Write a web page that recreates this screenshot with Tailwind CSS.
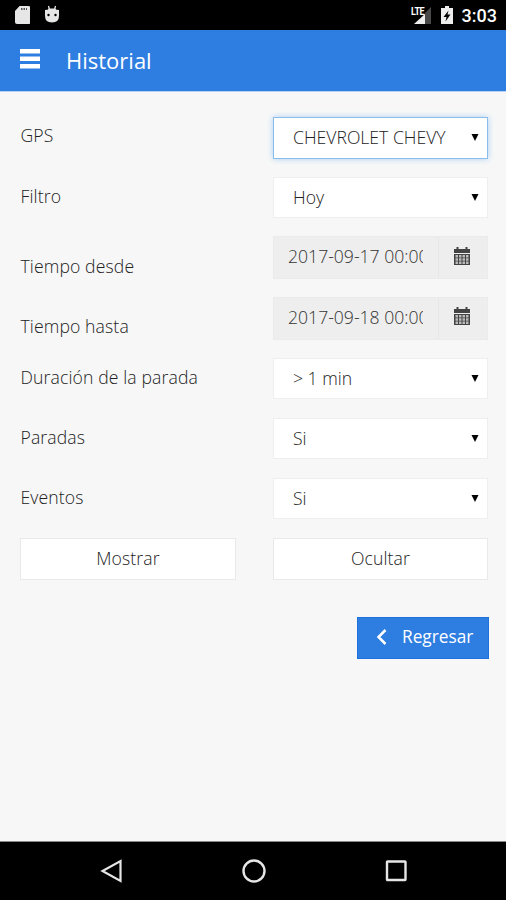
<!DOCTYPE html>
<html lang="es">
<head>
    <meta charset="UTF-8">
    <meta name="viewport" content="width=device-width, initial-scale=1.0">
    <script src="https://cdn.jsdelivr.net/npm/@tailwindcss/browser@4"></script>
    <title>Historial</title>
</head>
<body class="bg-[#f7f7f7] font-['Open_Sans',sans-serif] text-[17.6px] font-light leading-6 text-[#222]">
    <div class="flex flex-col h-[900px] w-[506px] overflow-hidden">
        <!-- Status bar -->
        <div class="flex h-[30px] shrink-0 items-center bg-black pl-[14px] pr-[9px] text-white">
            <svg class="w-4 h-5" viewBox="0 0 16 20" fill="#e6e6e6"><path d="M5.500 1h9q2 0 2 2v14q0 2-2 2H3q-2 0-2-2V6z"/><path d="M7 3h1.500v2H7zM9.500 3h1.500v2H9.500zM12 3h1v2h-1z" fill="#555"/></svg>
            <svg class="ml-[14px] w-4 h-5" viewBox="0 0 16 20"><path d="M4.500 1l1 4M11.500 1l-1 4" stroke="#e6e6e6" stroke-width="1.300"/><path d="M1 5q3 0 4-1.500h6Q12 5 15 5v6q0 6.500-7 6.500T1 11z" fill="#e6e6e6"/><circle cx="4.500" cy="10" r="1.200"/><circle cx="11.500" cy="10" r="1.200"/></svg>
            <div class="ml-auto flex items-center">
                <div class="relative w-[23px] h-5">
                    <span class="absolute left-0.5 top-0.5 origin-left scale-x-90 font-['Roboto',sans-serif] text-[10px] font-bold leading-[10px] tracking-[-0.500px]">LTE</span>
                    <svg class="w-[23px] h-5" viewBox="0 0 23 20"><path d="M22 2v17H16V8z" fill="#484848"/><path d="M16 9v10H5z" fill="#eee"/></svg>
                </div>
                <svg class="ml-[9px] w-[12px] h-5" viewBox="0 0 12 20"><path d="M4 1h4v2h4v16H0V3h4z" fill="#eee"/><path d="M7.500 5.500L2.500 12H5.500L4.500 16.500L9.500 9.500H6.500z"/></svg>
                <span class="ml-[9px] mt-0.5 font-['Roboto',sans-serif] text-[18px] font-medium leading-5">3:03</span>
            </div>
        </div>

        <!-- Header -->
        <header class="flex h-[62px] shrink-0 items-center border-b border-[#b8d2f3] bg-[#2e7de1] pl-5 text-white">
            <svg class="w-5 h-5 -mt-1" viewBox="0 0 20 20" fill="currentColor"><path d="M0 0h20v4.500H0zM0 7.500h20v4.500H0zM0 15h20v4.500H0z"/></svg>
            <h1 class="-mt-0.5 ml-[26px] text-[22px] font-normal leading-8">Historial</h1>
        </header>

        <!-- Form -->
        <main class="flex grow flex-col pl-5 pr-[18px] pt-[25px]">
            <div class="flex h-[60.200px] items-start justify-between">
                <label class="pl-[0.500px] pt-[6px] tracking-[0.120px]">GPS</label>
                <div class="flex h-[42px] w-[215px] items-center justify-between border border-[#8abcec] bg-white pb-0.5 pl-[19px] pr-2 shadow-[0_0_6px_#a9d0f5]">
                    <span>CHEVROLET CHEVY</span>
                    <svg class="w-2 h-[7px]" viewBox="0 0 8 7"><path d="M0.500 0h7L4 7z" fill="#000"/></svg>
                </div>
            </div>
            <div class="flex h-[60.200px] items-start justify-between">
                <label class="pl-[0.500px] pt-[7px] tracking-[0.120px]">Filtro</label>
                <div class="flex h-[41px] w-[215px] items-center justify-between border border-[#eee] bg-white pl-[19px] pr-2">
                    <span class="-mt-0.5">Hoy</span>
                    <svg class="w-2 h-[7px]" viewBox="0 0 8 7"><path d="M0.500 0h7L4 7z" fill="#000"/></svg>
                </div>
            </div>
            <div class="flex h-[60.200px] items-start justify-between">
                <label class="pl-[0.500px] pt-[17px] tracking-[0.120px]">Tiempo desde</label>
                <div class="-mt-px flex h-[43px] w-[215px] border border-[#ebebeb] bg-[#eee] text-[#333]">
                    <div class="w-[165px] border-r border-[#e7e7e7] pl-[14px] pt-[7px]"><div class="w-[135px] overflow-hidden whitespace-nowrap">2017-09-17 00:00</div></div>
                    <div class="flex grow justify-center pr-0.5 pt-[10px]">
                        <svg class="w-4 h-[18px]" viewBox="0 0 16 18"><path d="M0 2h16v4H0zM2.500 0h2v3h-2zM11.500 0h2v3h-2zM0 7h16v11H0z" fill="#444"/><path d="M1.500 8h2.500v2.500H1.500zM5 8h2.500v2.500H5zM8.500 8H11v2.500H8.500zM12 8h2.500v2.500H12zM1.500 11.300h2.500v2.500H1.500zM5 11.300h2.500v2.500H5zM8.500 11.300H11v2.500H8.500zM12 11.300h2.500v2.500H12zM1.500 14.600h2.500v2.400H1.500zM5 14.600h2.500v2.400H5zM8.500 14.600H11v2.400H8.500zM12 14.600h2.500v2.400H12z" fill="#bbb"/></svg>
                    </div>
                </div>
            </div>
            <div class="flex h-[60.200px] items-start justify-between">
                <label class="pl-[0.500px] pt-[16px] tracking-[0.120px]">Tiempo hasta</label>
                <div class="-mt-px flex h-[43px] w-[215px] border border-[#ebebeb] bg-[#eee] text-[#333]">
                    <div class="w-[165px] border-r border-[#e7e7e7] pl-[14px] pt-[7px]"><div class="w-[135px] overflow-hidden whitespace-nowrap">2017-09-18 00:00</div></div>
                    <div class="flex grow justify-center pr-0.5 pt-[9px]">
                        <svg class="w-4 h-[18px]" viewBox="0 0 16 18"><path d="M0 2h16v4H0zM2.500 0h2v3h-2zM11.500 0h2v3h-2zM0 7h16v11H0z" fill="#444"/><path d="M1.500 8h2.500v2.500H1.500zM5 8h2.500v2.500H5zM8.500 8H11v2.500H8.500zM12 8h2.500v2.500H12zM1.500 11.300h2.500v2.500H1.500zM5 11.300h2.500v2.500H5zM8.500 11.300H11v2.500H8.500zM12 11.300h2.500v2.500H12zM1.500 14.600h2.500v2.400H1.500zM5 14.600h2.500v2.400H5zM8.500 14.600H11v2.400H8.500zM12 14.600h2.500v2.400H12z" fill="#bbb"/></svg>
                    </div>
                </div>
            </div>
            <div class="flex h-[60.200px] items-start justify-between">
                <label class="pl-[0.500px] pt-[7px] tracking-[0.120px]">Duración de la parada</label>
                <div class="flex h-[41px] w-[215px] items-center justify-between border border-[#eee] bg-white pl-[19px] pr-2">
                    <span>&gt; 1 min</span>
                    <svg class="w-2 h-[7px]" viewBox="0 0 8 7"><path d="M0.500 0h7L4 7z" fill="#000"/></svg>
                </div>
            </div>
            <div class="flex h-[60.200px] items-start justify-between">
                <label class="pl-[0.500px] pt-[7px] tracking-[0.120px]">Paradas</label>
                <div class="flex h-[41px] w-[215px] items-center justify-between border border-[#eee] bg-white pl-[19px] pr-2">
                    <span>Si</span>
                    <svg class="w-2 h-[7px]" viewBox="0 0 8 7"><path d="M0.500 0h7L4 7z" fill="#000"/></svg>
                </div>
            </div>
            <div class="flex h-[60.200px] items-start justify-between">
                <label class="pl-[0.500px] pt-[7px] tracking-[0.120px]">Eventos</label>
                <div class="flex h-[41px] w-[215px] items-center justify-between border border-[#eee] bg-white pl-[19px] pr-2">
                    <span class="-mt-0.5">Si</span>
                    <svg class="w-2 h-[7px]" viewBox="0 0 8 7"><path d="M0.500 0h7L4 7z" fill="#000"/></svg>
                </div>
            </div>
            <div class="flex justify-between">
                <button class="h-[42px] w-[216px] border border-[#e9e9e9] bg-white pb-0.5 tracking-[0.120px]">Mostrar</button>
                <button class="h-[42px] w-[215px] border border-[#e9e9e9] bg-white pb-0.5 tracking-[0.120px]">Ocultar</button>
            </div>
            <button class="-mr-px mt-[37px] flex h-[42px] w-[132px] items-center self-end border border-[#1f72dc] bg-[#2e7de1] pb-[3px] pl-[18px] text-[17.3px] font-normal text-white">
                <svg class="w-[11px] h-4" viewBox="0 0 11 16" fill="none" stroke="currentColor" stroke-width="2.500"><path d="M9.500 1L2.500 8L9.500 15"/></svg>
                <span class="ml-[15px]">Regresar</span>
            </button>
        </main>

        <!-- Navigation bar -->
        <nav class="flex h-[59px] shrink-0 items-center justify-between border-t border-[#888] bg-black pl-[100px] pr-[98px]">
            <svg class="w-6 h-6" viewBox="0 0 24 24" fill="none" stroke="#e6e6e6" stroke-width="2.200"><path d="M20.500 2v20L2.500 12z"/></svg>
            <svg class="w-6 h-6" viewBox="0 0 24 24" fill="none" stroke="#e6e6e6" stroke-width="2.400"><circle cx="12" cy="12" r="10.500"/></svg>
            <svg class="w-6 h-6" viewBox="0 0 24 24" fill="none" stroke="#e6e6e6" stroke-width="2.400"><rect x="3" y="2.500" width="18.500" height="18.500" rx="0.500"/></svg>
        </nav>
    </div>
</body>
</html>
